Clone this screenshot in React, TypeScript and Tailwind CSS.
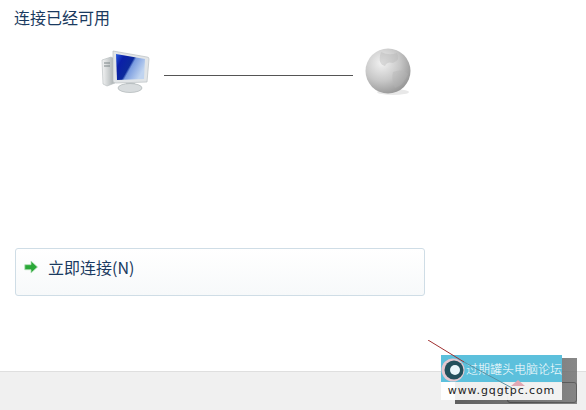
function ComputerIcon() {
  return (
    <svg width="50" height="44" viewBox="0 0 50 44" className="shrink-0">
      <defs>
        <linearGradient id="screen" x1="0" y1="0" x2="1" y2="0.5">
          <stop offset="0" stopColor="#2a5ce0" />
          <stop offset="0.25" stopColor="#0a1fa8" />
          <stop offset="0.55" stopColor="#0c2a9c" />
          <stop offset="0.62" stopColor="#7a9ce0" />
          <stop offset="1" stopColor="#c0d4f0" />
        </linearGradient>
        <linearGradient id="tower" x1="0" y1="0" x2="1" y2="0">
          <stop offset="0" stopColor="#f4f5f5" />
          <stop offset="1" stopColor="#a4abad" />
        </linearGradient>
      </defs>
      <path d="M1 10 L10 7 L14 9 L14 33 L6 36 L2 34 Z" fill="url(#tower)" stroke="#b4babc" strokeWidth="0.6" />
      <path d="M3 13h6M3 16h6" stroke="#7d8688" strokeWidth="1" />
      <path d="M12 1 L46 7 Q48 7 48 9 L46 32 L15 33 Q12 33 12 31 Z" fill="#e2e5e7" stroke="#b9bfc2" strokeWidth="0.7" />
      <path d="M15 4 L44 9 L43 29 L16 30 Z" fill="url(#screen)" />
      <path d="M25 33 L34 33 L35 37 L24 37 Z" fill="#c5cacc" />
      <ellipse cx="29" cy="38" rx="12" ry="4.5" fill="#d8dcde" stroke="#aeb4b6" strokeWidth="0.7" />
    </svg>
  );
}

function GlobeIcon() {
  return (
    <svg width="48" height="48" viewBox="0 0 48 48" className="shrink-0">
      <defs>
        <radialGradient id="globe" cx="0.36" cy="0.32" r="0.8">
          <stop offset="0" stopColor="#f2f2f2" />
          <stop offset="0.5" stopColor="#c8c8c8" />
          <stop offset="1" stopColor="#8a8a8a" />
        </radialGradient>
      </defs>
      <ellipse cx="28" cy="44" rx="16" ry="3" fill="#e8e8e8" />
      <circle cx="23" cy="23" r="22.5" fill="url(#globe)" />
      <path d="M16 4 Q24 8 32 5 Q36 12 28 15 Q22 13 20 18 Q12 16 16 4Z M28 24 Q38 20 43 26 Q38 38 30 40 Q26 32 28 24Z" fill="#b4b4b4" opacity="0.4" />
    </svg>
  );
}

function ArrowIcon() {
  return (
    <svg width="14" height="14" viewBox="0 0 14 14" className="shrink-0">
      <path d="M7 1 L13.5 7 L7 13 V9.7 H0.8 V4.7 H7 Z" fill="#2aa838" stroke="#b3dfb8" strokeWidth="0.8" />
    </svg>
  );
}

function Watermark() {
  return (
    <div className="absolute top-[355px] left-[441px] w-[121px]">
      <div className="absolute top-[3px] left-[14px] h-[46px] w-[122px] bg-gradient-to-r from-[#3c3c3c]/80 to-[#6a6a6a]/80" />
      <div className="relative flex h-[27px] items-center gap-[1px] bg-[#5cc0dc]">
        <svg width="24" height="26" viewBox="0 0 24 26" className="shrink-0">
          <circle cx="12" cy="14" r="11.5" fill="#e6c8d0" />
          <circle cx="13" cy="14" r="9.5" fill="#23505c" />
          <circle cx="14" cy="14" r="5" fill="#eaf6fa" />
        </svg>
        <span className="text-[12px] leading-none font-light whitespace-nowrap text-white">过期罐头电脑论坛</span>
      </div>
      <div className="relative flex h-[18px] items-center justify-center bg-white/90 font-['DejaVu_Sans',sans-serif] text-[11px] tracking-[0.9px] text-[#222]">
        www.gqgtpc.com
      </div>
    </div>
  );
}

export default function App() {
  return (
    <div className="relative flex h-[410px] w-[586px] flex-col overflow-hidden bg-white font-['Noto_Sans_CJK_SC',sans-serif]">
      <div className="flex flex-1 flex-col px-[15px]">
        <h1 className="mt-[8px] -ml-[1px] text-[16px] leading-[18px] font-normal text-[#1a3a60]">连接已经可用</h1>
        <div className="mt-[22px] ml-[86px] flex items-center">
          <ComputerIcon />
          <div className="mt-[6px] mr-[12px] ml-[13px] h-px w-[189px] bg-[#555]" />
          <GlobeIcon />
        </div>
        <button className="mt-[152px] flex h-[48px] w-[410px] items-center gap-[10px] rounded-[3px] border border-[#cfdde6] bg-gradient-to-b from-white to-[#f7f9fa] pb-[10px] pl-[8px]">
          <ArrowIcon />
          <span className="text-[16px] text-[#1a3a60]">立即连接(N)</span>
        </button>
      </div>
      <div className="flex h-[39px] items-start justify-end border-t border-[#dfdfdf] bg-[#f0f0f0] pt-[10px] pr-[9px]">
        <div className="h-[21px] w-[70px] rounded-[3px] border border-[#333] bg-[#eeeeee]" />
      </div>
      <Watermark />
      <svg className="absolute top-[340px] left-[428px]" width="100" height="60" viewBox="0 0 100 60">
        <path d="M0 0 L36 22" stroke="#a03030" strokeWidth="1" fill="none" />
        <path d="M36 22 L84 48" stroke="#5a8fa0" strokeWidth="1" fill="none" />
        <path d="M90 40 L83 46 L97 46 Z" fill="#e0a8b4" />
      </svg>
    </div>
  );
}
